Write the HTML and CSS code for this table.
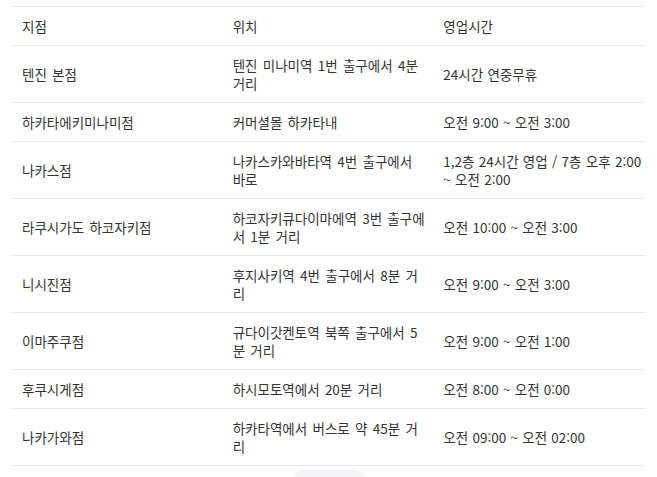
FILE: index.html
```html
<!DOCTYPE html>
<html lang="ko">
<head>
<meta charset="utf-8">
<link rel="stylesheet" href="styles.css">
</head>
<body>
<div class="wrap">
  <table class="stores">
    <thead>
      <tr><th>지점</th><th>위치</th><th>영업시간</th></tr>
    </thead>
    <tbody>
      <tr><td>텐진 본점</td><td>텐진 미나미역 1번 출구에서 4분 거리</td><td>24시간 연중무휴</td></tr>
      <tr><td>하카타에키미나미점</td><td>커머셜몰 하카타내</td><td>오전 9:00 ~ 오전 3:00</td></tr>
      <tr><td>나카스점</td><td>나카스카와바타역 4번 출구에서 바로</td><td>1,2층 24시간 영업 / 7층 오후 2:00 ~ 오전 2:00</td></tr>
      <tr><td>라쿠시가도 하코자키점</td><td>하코자키큐다이마에역 3번 출구에서 1분 거리</td><td>오전 10:00 ~ 오전 3:00</td></tr>
      <tr><td>니시진점</td><td>후지사키역 4번 출구에서 8분 거리</td><td>오전 9:00 ~ 오전 3:00</td></tr>
      <tr><td>이마주쿠점</td><td>규다이갓켄토역 북쪽 출구에서 5분 거리</td><td>오전 9:00 ~ 오전 1:00</td></tr>
      <tr><td>후쿠시게점</td><td>하시모토역에서 20분 거리</td><td>오전 8:00 ~ 오전 0:00</td></tr>
      <tr><td>나카가와점</td><td>하카타역에서 버스로 약 45분 거리</td><td>오전 09:00 ~ 오전 02:00</td></tr>
    </tbody>
  </table>
  <div class="more"></div>
</div>
</body>
</html>
```

FILE: styles.css
```css
html, body {
  margin: 0;
  padding: 0;
  background: #fff;
}
body {
  font-family: "Noto Sans CJK KR", "Noto Sans", sans-serif;
  font-size: 13.5px;
  word-spacing: 1.5px;
  color: #333;
  overflow: hidden;
}
.wrap {
  padding: 6px 12px 0 13px;
  width: 632px;
}
.stores {
  width: 632px;
  border-collapse: collapse;
  table-layout: fixed;
  border-top: 1px solid #e8e8e8;
}
.stores th,
.stores td {
  font-weight: normal;
  text-align: left;
  vertical-align: middle;
  padding: 10px 9px;
  line-height: 18px;
  border-bottom: 1px solid #e8e8e8;
  word-break: keep-all;
  overflow-wrap: break-word;
}
.stores td:nth-child(2) {
  word-break: break-all;
}
.stores th:nth-child(3),
.stores td:nth-child(3) {
  padding-right: 3px;
  word-spacing: 0.5px;
}
.more {
  width: 77px;
  height: 30px;
  margin: 4px auto 0;
  border-radius: 15px;
  background: #f4f4f6;
}
```
